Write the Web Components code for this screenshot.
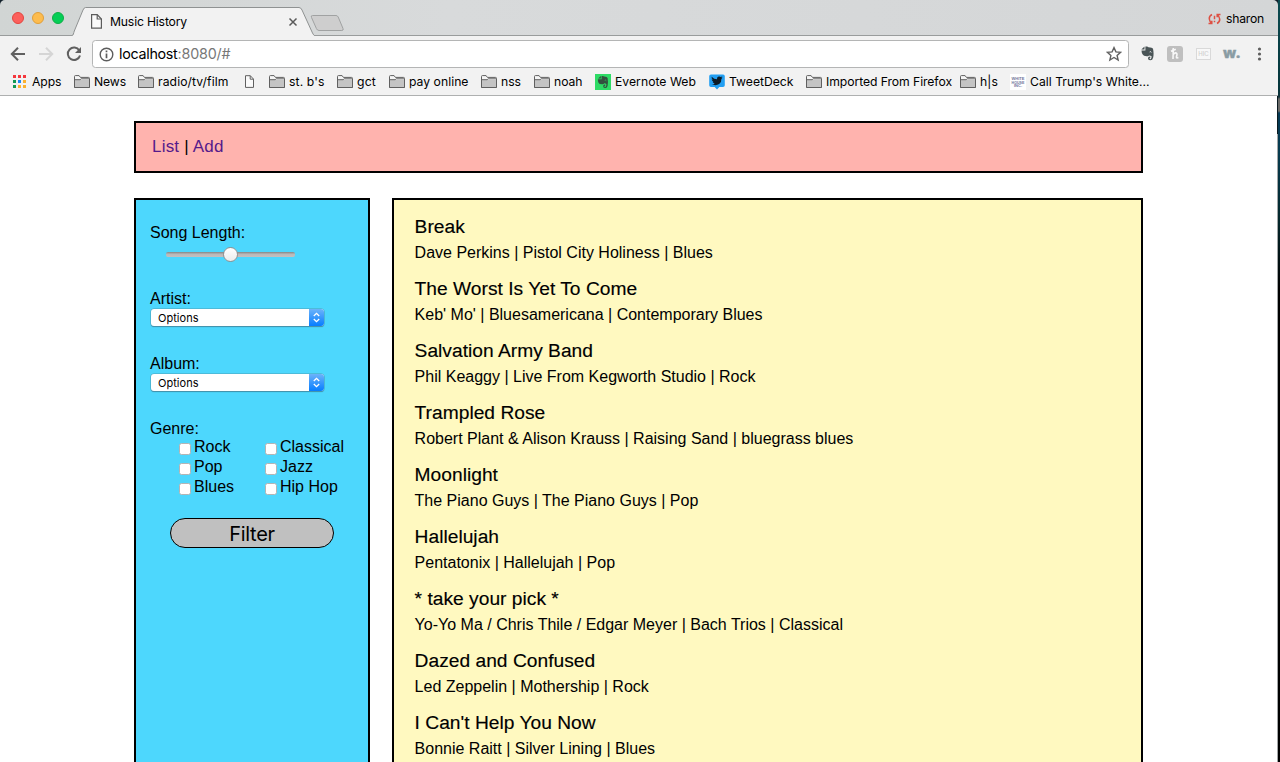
<!DOCTYPE html>
<html lang="en">
<head>
<meta charset="utf-8">
<title>Music History</title>
<style>
html,body{margin:0;height:100%;overflow:hidden;background:#fff}
</style>
</head>
<body>
<browser-window>
  <music-app></music-app>
</browser-window>
<script>
const define = (name, html, setup) => {
  const t = document.createElement('template');
  t.innerHTML = html;
  customElements.define(name, class extends HTMLElement {
    constructor() {
      super();
      this.attachShadow({ mode: 'open' }).append(t.content.cloneNode(true));
    }
    connectedCallback() { if (setup) setup(this, this.shadowRoot); }
  });
};

/* A single-line label whose tracking is adjusted to occupy the width in `w`. */
define('fit-text', `<style>:host{display:inline-block;white-space:nowrap}span{display:inline-block;white-space:pre}</style><span><slot></slot></span>`, (el, root) => {
  const w = parseFloat(el.getAttribute('w'));
  const run = () => {
    const s = root.querySelector('span');
    s.style.letterSpacing = '0';
    const natural = s.getBoundingClientRect().width;
    if (natural && w) s.style.letterSpacing = ((w - natural) / el.textContent.length) + 'px';
  };
  requestAnimationFrame(run);
});

const ICONS = {
  apps: `<svg width="14" height="14" viewBox="0 0 14 14" shape-rendering="crispEdges"><g fill="#f4383d"><path d="M0 0h3v3H0zM5 0h3v3H5zM10 0h3v3h-3z"/></g><path fill="#119a55" d="M0 5h3v3H0zM0 10h3v3H0z"/><path fill="#1a87f5" d="M5 5h3v3H5z"/><path fill="#fbb12f" d="M10 5h3v3h-3zM5 10h3v3H5zM10 10h3v3h-3z"/></svg>`,
  folder: `<svg width="16" height="14" viewBox="0 0 16 14"><path d="M.5 12.500V1.500q0-.9.9-.9h3.700l1.300 1.800h8.100q1 0 1 .9v9.200z" fill="#f5f5f5" stroke="#606060"/><path d="M1 5h14v7.500H1z" fill="#c4c4c4"/><path d="M1 4.700h5.200l1-.9H15" fill="none" stroke="#606060"/><path d="M.5 12.500h15" stroke="#606060"/></svg>`,
  page: `<svg width="9" height="13" viewBox="0 0 9 13"><path d="M.5.7h4.800l3.200 3.400v8.300h-8z" fill="#fafafa" stroke="#606060"/><path d="M5.200.7v3.500h3.300" fill="none" stroke="#606060"/></svg>`,
  evernote: `<svg width="16" height="16" viewBox="0 0 16 16"><path fill="#2edb65" d="M0 0h16v16H0z"/><path fill="#33503f" d="M5.900 2v2.600H3.100zM6.600 2.100q1.700-.4 2.600.4 3.200.2 3.400 1.500.7 3.700 0 7.700-.4 2.400-2.600 2.200-2 0-1.800-2 .3-1.600 2-1.400v1.300q-.9-.1-.8.6.2.6 1 .5 1-.2 1-2.800-.8-.8-2.200-.8-.3 1-2.100.9-3 0-3.600-1.500-.7-1.900-.6-3.500h3.700z"/><path d="M9.800 6.400q1-.7 1.500.3" stroke="#2edb65" stroke-width=".7" fill="none"/></svg>`,
  tweetdeck: `<svg width="16" height="16" viewBox="0 0 16 16"><path fill="#239ff2" d="M2 .5h12q1.800 0 1.800 1.800v9q0 1.800-1.800 1.800h-3.700L8 15.500l-2.300-2.400H2Q.2 13.100.2 11.300v-9Q.2.5 2 .5z"/><path fill="#0d1b26" d="M2.700 2.700Q5 5.200 8 5.300 7.500 3 9.700 2.500q1.300-.2 2 .5l1.600-.6-.9 1.500 1.200-.3-1.200 1.300q.2 3.200-2.200 5.100-3.300 2.100-7.600.3 2 0 3.100-.9-1.700-.3-2.200-1.600l1-.1Q3 7.100 2.600 5.500l1.200.2Q2.100 4.400 2.700 2.700z"/></svg>`,
  whitehouse: `<svg width="16" height="16" viewBox="0 0 16 16" overflow="visible"><path fill="#fff" d="M0 0h16v16H0z"/><g fill="#55608a" opacity=".85" font-family="Liberation Sans,sans-serif" font-weight="700" font-size="4" text-anchor="middle"><text x="8" y="6">WHITE</text><text x="8" y="9.600" font-size="3.600">HOUSE</text><text x="8" y="13">INC.</text></g></svg>`
};
define('book-mark', `<style>
:host{display:flex;align-items:center;flex:none;height:16px;font-size:12.200px}
i{display:flex;flex:none;font-style:normal}
::slotted(*){margin:-1px 0 1px 4px}
:host([icon=apps]) ::slotted(*){margin-left:5px}
:host([icon=page]) i{margin-top:-1px}
</style><i></i><slot></slot>`, (el, root) => {
  root.querySelector('i').innerHTML = ICONS[el.getAttribute('icon')];
  el.style.width = el.getAttribute('span') + 'px';
});

define('tab-strip', `<style>
:host{display:flex;height:36px;background:linear-gradient(90deg,#d1d5d4,#d8dadb 35%,#d4d6d7);box-shadow:inset 0 -1px #999c9c;box-sizing:border-box;padding-left:12px;border-radius:5px 5px 0 0}
.lights{display:flex;gap:8px;padding-top:12px;width:60px}
.lights b{width:10px;height:10px;border-radius:50%;border:1px solid #e2463f;background:#fc605c}
.lights b:nth-child(2){background:#fdbc4e;border-color:#e09f3a}.lights b:nth-child(3){background:#05ce56;border-color:#0eae45}
.tab{display:grid;width:242px;height:36px}
.tab>*{grid-area:1/1}
.in{display:flex;align-items:center;padding:1px 16px 0 19px;height:28px;box-sizing:border-box;margin-top:7px}
.in svg.x{margin-left:auto}
fit-text{margin-left:8px}
.new{margin:15px 0 0 -4px}
.user{margin-left:auto;display:flex;align-items:center;height:36px;padding:1px 14px 0 0;box-sizing:border-box}
.user fit-text{margin-left:5px}
</style>
<div class="lights"><b></b><b></b><b></b></div>
<div class="tab">
<svg width="242" height="36"><path d="M0 36V35.500C1.500 35.500 1.500 33 2.300 31L11 10q1-2.500 2.600-2.500H227q1.900 0 3 2.500l10.500 23q1 2.500 2.500 2.500V36z" fill="#f2f2f2"/><path d="M0 35.500C1.500 35.500 1.500 33 2.300 31L11 10q1-2.500 2.600-2.500H227q1.900 0 3 2.500l10.500 23q1 2.500 2.500 2.500" fill="none" stroke="#8f9292"/></svg>
<div class="in"><svg width="11" height="15" viewBox="0 0 11 15"><path d="M.600.700h5.600l4.200 4.300v9.200H.600z" fill="#fafafa" stroke="#5c5c5c" stroke-width="1.200"/><path d="M6.200.700V5h4.200" fill="none" stroke="#5c5c5c" stroke-width="1.200"/></svg><fit-text w="77">Music History</fit-text><svg class="x" width="10" height="10"><path d="M1.500 1.500l7 7m0-7l-7 7" stroke="#5a5a5a" stroke-width="1.500"/></svg></div>
</div>
<svg class="new" width="36" height="17"><path d="M1.500 2.500Q.500.500 2.500.500H26q1.500 0 2.200 1.500l4.800 11.500q.8 2-1.200 2H9q-1.800 0-2.600-2z" fill="#cecece" stroke="#a0a2a2"/></svg>
<div class="user"><svg width="13" height="12" viewBox="0 0 13 12" fill="none" stroke="#dd5144" stroke-width="1.500"><path d="M4 1.500Q1 3 1.300 6 1.700 8.500 3.500 10.300M.5 10.600h3.300V7.800M9 10.500Q12 9 11.700 6 11.300 3.500 9.500 1.700M12.500 1.400H9.200v2.800"/><path d="M6.500 2.800v3.500M6.500 7.700v1.500"/></svg><fit-text w="38">sharon</fit-text></div>`);

define('address-bar', `<style>
:host{display:flex;align-items:center;height:36px;padding:0 0 4px 10px;box-sizing:border-box;background:#f2f2f2}
:host>svg,svg{flex:none}
.nav{display:flex;align-items:center;width:82px;margin-top:3px;padding-top:1px}
.nav svg{margin-right:12px}
.box{display:flex;align-items:center;width:1035px;height:26px;border:1px solid #b4b5b5;border-radius:3.500px;background:#fff;flex:none;margin-top:4px}
.box .i{margin:0 5px 0 6px}.box .s{margin:0 6px 0 auto}
.box fit-text{font-size:14.300px;margin-top:-1px}.g{color:#777}
.ext{display:flex;align-items:center;margin-left:12px;margin-top:3px}
.ext .w{font:800 14.500px/16px "Open Sans",sans-serif;color:#8a9ca4;-webkit-text-stroke:.400px #8a9ca4;margin-top:-2px}
.h{width:16px;height:16px;border-radius:3px;background:#bfbfbf;display:flex;justify-content:center;align-items:center;margin-left:13px}
.hic{width:13px;height:10px;border:1px solid #d9d9d9;background:#f8f8f8;color:#d0d0d0;font:500 6px/10px Inter,sans-serif;text-align:center;margin:0 12px 0 13px}
</style>
<div class="nav">
<svg width="16" height="16" fill="none" stroke="#606060" stroke-width="2"><path d="M15 8H2.300M8 1.800L1.800 8 8 14.200"/></svg>
<svg width="16" height="16" fill="none" stroke="#d5d5d5" stroke-width="2"><path d="M1 8h12.700M8 1.800L14.200 8 8 14.200"/></svg>
<svg width="16" height="16" fill="none" stroke="#606060" stroke-width="2"><path d="M13.300 4.500A6.200 6.200 0 1 0 14 9.500"/><path d="M15 1v6H9z" fill="#606060" stroke="none"/></svg>
</div>
<div class="box"><svg class="i" width="15" height="15" fill="none" stroke="#5c5c5c" stroke-width="1.400"><circle cx="7.500" cy="7.500" r="6.300"/><path d="M7.500 6.500v4.700M7.500 3.500v1.700" stroke-width="1.700"/></svg><fit-text w="58.500">localhost</fit-text><fit-text class="g" w="53">:8080/#</fit-text>
<svg class="s" width="16" height="16" viewBox="0 0 15 15"><path d="M7.500 1.500l1.800 4 4.400.4-3.300 2.900 1 4.300-3.900-2.300-3.900 2.300 1-4.300-3.300-2.900 4.400-.4z" fill="none" stroke="#606060" stroke-width="1.300"/></svg></div>
<div class="ext"><svg width="13" height="15" viewBox="0 0 13 15"><path fill="#4a5557" d="M3.500.5v3H.3zM4.400.6Q6.800 0 7.400 1.200q4.100.2 4.600 1.600 1.100 4.800.1 9-.5 2.600-3 2.500-2.300-.1-2.100-2.300.3-1.800 2.300-1.600v1.500q-1.100-.1-.9.700.3.700 1.100.6 1.100-.3 1.100-3-1-.8-2.600-.8-.5 1-2.300.9-3.300-.3-4-1.800Q.500 6.500.500 4.500h3.900z"/><path d="M8.700 6q1.200-.9 1.800.4" stroke="#f2f2f2" fill="none"/></svg>
<div class="h"><svg width="10" height="13" viewBox="0 0 10 13" fill="none" stroke="#f8f8f8" stroke-width="1.600"><path d="M3.300 1L3 12M1 4.300l4.800-2.100M3 8q1-2.300 2.800-2.100 1.500.3 1.100 2.200l-.5 2q-.1 1.400 2 .5"/></svg></div><div class="hic">HIC</div><fit-text class="w" w="17">w.</fit-text>
<svg width="5" height="14" style="margin-left:17px" fill="#5e5e5e"><circle cx="2.500" cy="2" r="1.600"/><circle cx="2.500" cy="7" r="1.600"/><circle cx="2.500" cy="12" r="1.600"/></svg></div>`);

define('bookmarks-bar', `<style>:host{display:flex;height:24px;padding:2px 0 5px 13px;box-sizing:border-box;background:#f2f2f2;border-bottom:1px solid #aeb0b0;align-items:center}</style>
<book-mark icon="apps" span="61"><fit-text w="29.500">Apps</fit-text></book-mark>
<book-mark icon="folder" span="64"><fit-text w="32">News</fit-text></book-mark>
<book-mark icon="folder" span="107"><fit-text w="70.500">radio/tv/film</fit-text></book-mark>
<book-mark icon="page" span="24"></book-mark>
<book-mark icon="folder" span="68"><fit-text w="35.500">st. b's</fit-text></book-mark>
<book-mark icon="folder" span="52"><fit-text w="19">gct</fit-text></book-mark>
<book-mark icon="folder" span="92"><fit-text w="59.500">pay online</fit-text></book-mark>
<book-mark icon="folder" span="53"><fit-text w="20">nss</fit-text></book-mark>
<book-mark icon="folder" span="61"><fit-text w="28.500">noah</fit-text></book-mark>
<book-mark icon="evernote" span="114"><fit-text w="81">Evernote Web</fit-text></book-mark>
<book-mark icon="tweetdeck" span="97"><fit-text w="64.500">TweetDeck</fit-text></book-mark>
<book-mark icon="folder" span="154"><fit-text w="126">Imported From Firefox</fit-text></book-mark>
<book-mark icon="folder" span="50"><fit-text w="18">h|s</fit-text></book-mark>
<book-mark icon="whitehouse" span="150"><fit-text w="119.500">Call Trump's White…</fit-text></book-mark>`);

define('browser-window', `<style>
:host{display:grid;grid-template-columns:1278px 2px;width:1280px;height:762px;overflow:hidden;background:#12202a;font:12.200px Inter,sans-serif;color:#000}
.win{height:762px;overflow:hidden;background:linear-gradient(#12202a 36px,#fff 36px)}
.page{background:linear-gradient(#0b1a20 38px,#a3a6a7 38px) right/1px 100% no-repeat #fff;height:666px}
.desk{background:linear-gradient(#0b4a50,#06363c 90px,#12343c 97px,#6a6a68 99px,#6a6a68 111px,#063a55 113px,#073c50 150px,#04282c 220px,#000 290px)}
</style><div class="win"><tab-strip></tab-strip><address-bar></address-bar><bookmarks-bar></bookmarks-bar><div class="page"><slot></slot></div></div><div class="desk"></div>`);

define('nav-header', `<style>
:host{display:flex;align-items:center;height:52px;box-sizing:border-box;border:2px solid #000;background:#ffb3ae;padding:0 16px}
div{font-size:17px;letter-spacing:.200px;white-space:pre}a{color:#551a8b;text-decoration:none}
</style><div><a href="#">List</a> | <a href="#">Add</a></div>`);

define('mac-select', `<style>
:host{display:flex;width:173px;height:17px;margin-left:1px;background:#fff;border-radius:3px;box-shadow:0 0 0 .500px #4d9fb8,0 1px 1px #39819c;overflow:hidden;font:11px/17px Inter,sans-serif}
span{flex:1;padding:1px 0 0 7px}
i{width:15px;background:linear-gradient(#6cb3fa,#067dff);display:flex;align-items:center;justify-content:center}
</style><span><slot></slot></span><i><svg width="9" height="11" fill="none" stroke="#fff" stroke-width="1.300"><path d="M1.800 4l2.700-2.700L7.200 4M1.800 7l2.700 2.700L7.200 7"/></svg></i>`);

define('range-slider', `<style>
:host{display:grid;align-items:center;justify-items:center;width:130px;height:16px;margin-left:15px}
:host>*{grid-area:1/1}
.t{width:129px;height:5px;margin-left:1px;border-radius:2px;background:linear-gradient(#858585,#b9b9b9 45%,#c4c0c0);box-sizing:border-box}
.k{width:13px;height:13px;border-radius:50%;border:1px solid #909090;background:linear-gradient(#fff,#ececec)}
</style><div class="t"></div><div class="k"></div>`);

define('check-item', `<style>
:host{display:flex;height:20px;line-height:20px}
i{width:10px;height:10px;border:1px solid #b4b4b4;border-radius:2.500px;background:#fff;margin:6px 3px 0 0}
</style><i></i><slot></slot>`);

define('filter-panel', `<style>
:host{display:flex;flex-direction:column;width:236px;box-sizing:border-box;border:2px solid #000;border-bottom:0;background:#4dd7fd;padding:24px 14px 0}
label{display:block;line-height:18px;height:18px}
range-slider{margin-top:4px}
.f{height:65px}.f.a{height:66px}
mac-select{margin-top:1px}
.g{display:grid;grid-template-columns:86px 90px;padding-left:29px;margin-top:-1px}
button{width:164px;height:30px;box-sizing:border-box;border:1px solid #000;border-radius:15px;background:#c0c0c0;font:20px Inter,sans-serif;color:#000;align-self:flex-start;margin:21px 0 0 20px;padding:1px 0 0}
</style>
<div class="f a"><label>Song Length:</label><range-slider></range-slider></div>
<div class="f"><label>Artist:</label><mac-select><fit-text w="40.500">Options</fit-text></mac-select></div>
<div class="f"><label>Album:</label><mac-select><fit-text w="40.500">Options</fit-text></mac-select></div>
<label>Genre:</label>
<div class="g"><check-item>Rock</check-item><check-item>Classical</check-item><check-item>Pop</check-item><check-item>Jazz</check-item><check-item>Blues</check-item><check-item>Hip Hop</check-item></div>
<button><fit-text w="45.500">Filter</fit-text></button>`);

define('song-item', `<style>
:host{display:block;height:62px;white-space:nowrap}
h4{margin:0;font-weight:400;font-size:19.200px;line-height:26px;letter-spacing:.015px;-webkit-text-stroke:.150px #000}
p{margin:0;line-height:26px}
</style><h4><slot name="title"></slot></h4><p><slot></slot></p>`);

const SONGS = [
  ['Break', 'Dave Perkins | Pistol City Holiness | Blues'],
  ['The Worst Is Yet To Come', "Keb' Mo' | Bluesamericana | Contemporary Blues"],
  ['Salvation Army Band', 'Phil Keaggy | Live From Kegworth Studio | Rock'],
  ['Trampled Rose', 'Robert Plant & Alison Krauss | Raising Sand | bluegrass blues'],
  ['Moonlight', 'The Piano Guys | The Piano Guys | Pop'],
  ['Hallelujah', 'Pentatonix | Hallelujah | Pop'],
  ['* take your pick *', 'Yo-Yo Ma / Chris Thile / Edgar Meyer | Bach Trios | Classical'],
  ['Dazed and Confused', 'Led Zeppelin | Mothership | Rock'],
  ["I Can't Help You Now", 'Bonnie Raitt | Silver Lining | Blues']
];
define('song-list', `<style>
:host{display:block;width:751px;box-sizing:border-box;border:2px solid #000;border-bottom:0;background:#fff9c0;padding:14px 20.600px 0}
</style>`, (el, root) => {
  for (const [title, detail] of SONGS) {
    const item = document.createElement('song-item');
    const t = document.createElement('span');
    t.slot = 'title';
    t.textContent = title;
    item.append(t, detail);
    root.append(item);
  }
});

define('music-app', `<style>
:host{display:block;width:1009px;margin-left:134px;padding-top:25px;font:16px "Liberation Sans",Arial,sans-serif}
main{display:flex;gap:22px;margin-top:25px;height:568px}
</style><nav-header></nav-header><main><filter-panel></filter-panel><song-list></song-list></main>`);
</script>
</body>
</html>
